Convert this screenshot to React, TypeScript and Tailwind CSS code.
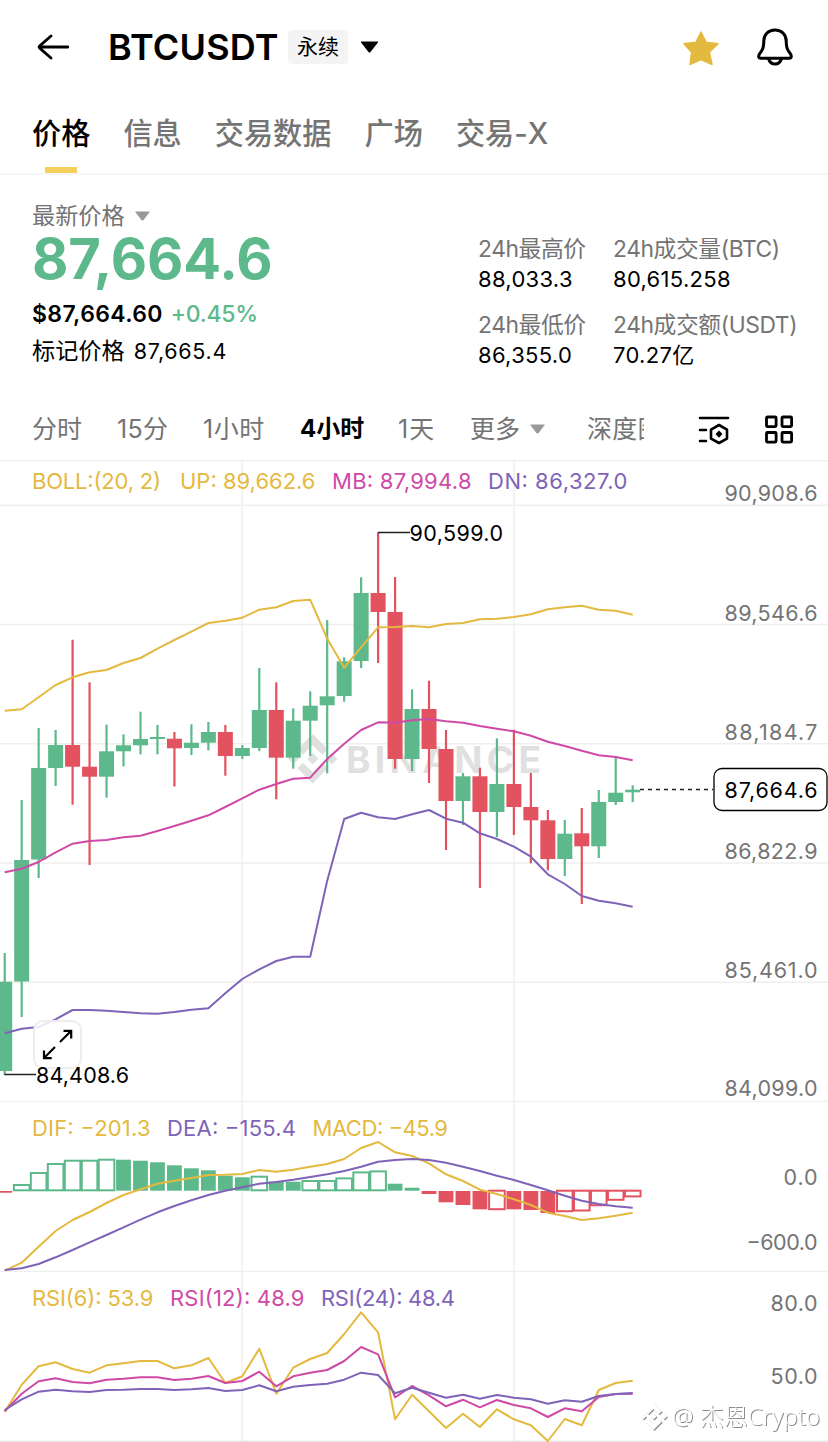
import type { ReactNode } from 'react';

type Candle = [top: number, bottom: number, high: number, low: number, up: 0 | 1];

const GREEN = '#5db98b';
const RED = '#e2525f';
const YELLOW = '#e4b93f';
const PINK = '#cf4aa6';
const PURPLE = '#7f63b8';

const tabs = ['价格', '信息', '交易数据', '广场', '交易-X'];

const stats = [
  { label: '24h最高价', value: '88,033.3' },
  { label: '24h成交量(BTC)', value: '80,615.258' },
  { label: '24h最低价', value: '86,355.0' },
  { label: '24h成交额(USDT)', value: '70.27亿' },
];

const candles: Candle[] = [
  [981.7, 1071, 953, 1075, 1], [860, 981.5, 800, 1017, 1], [768, 859.5, 728, 878, 1], [745, 768, 730, 786, 1],
  [745, 766.7, 639.7, 804.7, 0], [766.7, 776.7, 682.3, 865, 0], [751.3, 776.7, 724.7, 797.7, 1], [745.3, 751.3, 734.3, 766.3, 1],
  [739, 745.3, 711.7, 754.3, 1], [737, 739, 725, 754.3, 1], [738.7, 748.3, 732, 786.5, 0], [742.7, 748, 724.3, 755, 1],
  [732, 742.7, 722, 750.3, 1], [732, 756, 725, 775.7, 0], [748, 756, 745, 759, 1], [710, 748, 668, 751, 1],
  [710, 757.7, 682.3, 799.3, 0], [720.7, 757.7, 708.3, 768.7, 1], [705.7, 720.7, 691.3, 756, 1], [696.3, 705.3, 620, 773.3, 1],
  [661.3, 696, 657.3, 701.7, 1], [593, 661, 577.3, 668, 1], [593, 612, 532.3, 663, 0], [612, 759, 577, 768.7, 0],
  [709, 759, 689.3, 771, 1], [709, 749, 680.7, 783, 0], [749, 801, 730, 850, 0], [776.3, 801, 773, 825, 1],
  [776.3, 812, 767.7, 888, 0], [784, 812, 738.3, 837, 1], [784, 807, 729.7, 835, 0], [807, 820.3, 773, 863.3, 0],
  [820.3, 859, 810, 870.3, 0], [833.7, 859, 820, 876, 1], [833.3, 846.3, 808, 904, 0], [802, 846.3, 790, 858, 1],
  [792.7, 802, 757, 805, 1], [789.7, 792.3, 785.3, 802, 1],
];

const bollUp = [
  710.7, 709.3, 697.3, 685, 677.3, 672.3, 670, 663, 658, 648.7, 640, 631.7, 623, 620.7, 617.7, 609.7, 607.3, 601, 599.7,
  638.7, 667.7, 647.3, 627.3, 627, 626, 627.3, 624, 623, 619.3, 618.7, 617, 614.3, 609.3, 607.3, 605.7, 609.7, 610.7, 614.7,
];
const bollMid = [
  872.3, 868.7, 862, 852.3, 843.7, 841, 840, 837.3, 835.7, 831, 826, 820.7, 815.3, 807, 798.3, 789.7, 784, 778.7, 777.7,
  759, 743.7, 730, 722.3, 722.7, 720.3, 719, 721.3, 722.7, 726, 728.7, 731.3, 735.7, 741.7, 746, 750.7, 755.3, 757, 760.3,
];
const bollDown = [
  1033.3, 1028.7, 1027, 1019.3, 1010, 1010, 1010.7, 1012, 1013.3, 1013.7, 1012, 1009.7, 1008.3, 993.3, 979, 969.3, 961,
  956.7, 956.7, 880.7, 819, 812.7, 817.3, 819, 814.3, 810, 818.7, 822.7, 833.3, 839, 846.7, 856.7, 874.3, 884, 896, 900.7,
  903.3, 906.7,
];

// [end of bar, hollow]
const macdBars: [number, 0 | 1][] = [
  [1192.7, 0], [1184.3, 1], [1172.3, 1], [1163.3, 1], [1160, 1], [1160, 1], [1159, 1], [1159.7, 0], [1160.7, 0], [1162.3, 0],
  [1165.3, 0], [1168.3, 0], [1170.3, 0], [1175.7, 0], [1177.3, 0], [1176, 1], [1181.7, 0], [1181.7, 0], [1180.3, 1],
  [1180.3, 1], [1177.7, 1], [1171.7, 1], [1170.7, 1], [1183.7, 0], [1187.7, 0], [1194, 0], [1202.3, 0], [1205, 0],
  [1209.3, 0], [1209.7, 1], [1209.3, 0], [1210, 0], [1213, 0], [1211.7, 1], [1211, 1], [1205.7, 1], [1200.3, 1], [1196.9, 1],
];
const dif = [
  1270.7, 1262.7, 1246.7, 1231, 1220, 1212, 1203, 1195, 1189.3, 1183.7, 1180.7, 1178, 1175, 1174.7, 1174, 1170, 1171.7,
  1169.7, 1166.7, 1164, 1159, 1148, 1142, 1152.3, 1156, 1163.3, 1174.3, 1181, 1189.7, 1194, 1199.3, 1205, 1212.7, 1216,
  1220, 1218.3, 1215.7, 1212.7,
];
const dea = [
  1270, 1268.3, 1264, 1257.3, 1250, 1242.3, 1235, 1227.3, 1219.7, 1212.3, 1206, 1200.3, 1195, 1190.7, 1187.3, 1183.7, 1182,
  1179.7, 1177, 1174.3, 1171, 1166.7, 1161.7, 1160, 1159, 1160, 1162.7, 1166.7, 1171, 1175.7, 1180, 1185, 1190.3, 1195.7,
  1200.7, 1204, 1206.3, 1207.7,
];

const rsi6 = [
  1412, 1384.7, 1366.3, 1362.3, 1369, 1372.7, 1365.3, 1363.3, 1361, 1361, 1368.3, 1365.3, 1358, 1383, 1376.3, 1348.7,
  1393.7, 1367.7, 1359, 1353, 1334, 1312.3, 1332.3, 1419.3, 1394.7, 1411.3, 1428, 1413.7, 1427, 1409.3, 1419.3, 1425.3,
  1441, 1419, 1425.3, 1390, 1383, 1380.7,
];
const rsi12 = [
  1411.3, 1393.7, 1381.3, 1378.3, 1382, 1383.3, 1379.7, 1378.7, 1377.3, 1377.3, 1380, 1378.7, 1376, 1383, 1381, 1371.7,
  1386.3, 1376.3, 1372.7, 1370, 1361, 1347, 1354.3, 1397.3, 1386, 1395.3, 1406.3, 1399.7, 1407.3, 1400, 1405, 1408.3, 1417,
  1408.3, 1411.3, 1397, 1394, 1393.7,
];
const rsi24 = [
  1410, 1399.3, 1391.7, 1389.7, 1391.3, 1392, 1390, 1389.7, 1389, 1389, 1390, 1389.3, 1388, 1391, 1390, 1385.3, 1391.3,
  1386.7, 1385, 1383.7, 1379.7, 1372.7, 1375, 1393.3, 1387.7, 1392.7, 1397.7, 1394.7, 1398.7, 1395, 1397.7, 1399.3, 1403.7,
  1400.3, 1401.7, 1396, 1394, 1393,
];

const xAt = (i: number) => 4.7 + 16.973 * i;

function Line({ data, color }: { data: number[]; color: string }) {
  const points = data.map((y, i) => `${xAt(i).toFixed(1)},${y}`).join(' ');
  return <polyline points={points} fill="none" stroke={color} strokeWidth="2" strokeLinejoin="round" />;
}

function AxisLabel({ y, width, children }: { y: number; width: number; children: ReactNode }) {
  return (
    <text x={817.5 - width} y={y} textLength={width} fontSize="21.5" fill="#747474">
      {children}
    </text>
  );
}

function VerticalGrid({ y1, y2 }: { y1: number; y2: number }) {
  return <path d={`M242 ${y1}V${y2}M514 ${y1}V${y2}`} stroke="#efefef" strokeWidth="1.5" />;
}

function BinanceMark() {
  return (
    <>
      <path d="M38.73 53.2l24.59-24.58 24.6 24.6 14.3-14.31L63.32 0 24.42 38.9z" />
      <path d="M0 63.31l14.3-14.31 14.31 14.31-14.31 14.3z" />
      <path d="M38.73 73.41L63.32 98l24.6-24.6 14.31 14.29-38.91 38.92-38.9-38.89z" />
      <path d="M98 63.31L112.3 49l14.31 14.3-14.31 14.32z" />
      <path d="M77.83 63.3L63.32 48.78 48.79 63.31l14.53 14.5z" />
    </>
  );
}

function Caret({ className }: { className: string }) {
  return (
    <svg viewBox="0 0 18 12" className={className} fill="currentColor">
      <path d="M1 .5h16q1 0 .4.9L10 11q-1 1-2 0L.6 1.4Q0 .5 1 .5z" />
    </svg>
  );
}

function Header() {
  return (
    <header className="flex h-[94px] items-center pl-[37px] pr-[35px]">
      <svg viewBox="0 0 32 26" className="h-[26px] w-8" fill="none" stroke="#000" strokeWidth="2.8" strokeLinecap="round" strokeLinejoin="round">
        <path d="M31 13H2M14 2L3 11.6q-1.5 1.4 0 2.8L14 24" />
      </svg>
      <h1 className="ml-[39px] w-[170px] whitespace-nowrap text-[36px] leading-none font-semibold tracking-[0.2px]">BTCUSDT</h1>
      <span className="ml-[10px] flex h-[34px] w-[60px] items-center justify-center rounded-[4px] bg-[#f4f4f4] pb-[2px] text-[21px] leading-none">
        永续
      </span>
      <Caret className="ml-[12px] h-[12px] w-[19px]" />
      <svg viewBox="0 0 36 34" className="mt-[1px] ml-auto h-[34px] w-9" fill={YELLOW} stroke={YELLOW} strokeWidth="1.5" strokeLinejoin="round">
        <path d="M18 1l5 10.2 12 1.5-8.6 8.5L29 33.5l-11-5-11 5 1.6-12.3L1 12.7l12-1.5z" />
      </svg>
      <svg viewBox="0 0 36 38" className="ml-[38px] h-[38px] w-9" fill="none" stroke="#000" strokeWidth="3" strokeLinejoin="round">
        <path d="M18 2C11 2 6.8 7 6.8 13c0 6-.6 8-2.6 10.5C2 26 1.5 27 1.7 29q.2 1.2 1.6 1.2h29.4q1.4 0 1.6-1.2c.2-2-.3-3-2.5-5.5C29.800 21 29.2 19 29.2 13c0-6-4.2-11-11.2-11z" />
        <path d="M11.5 30.5c1 3.6 3.3 5.5 6.5 5.5s5.5-1.9 6.5-5.5" />
      </svg>
    </header>
  );
}

function Tabs() {
  return (
    <nav className="flex h-[81px] gap-[33px] border-b-2 border-[#f6f6f6] pl-8 text-[29.2px] font-medium leading-none">
      {tabs.map((tab, i) => (
        <div key={tab} className={`flex flex-col items-center justify-between pt-[25px] whitespace-nowrap ${i === 0 ? 'text-black' : 'text-[#747474]'}`}>
          {tab}
          {i === 0 && <span className="h-[6px] w-8 bg-[#f5cf5e]" />}
        </div>
      ))}
    </nav>
  );
}

function PriceSummary() {
  return (
    <section className="flex h-[225px] pl-8">
      <div className="w-[446px] pt-[28px]">
        <div className="flex items-center gap-[10px] text-[23.2px] leading-[26px] text-[#747474]">
          最新价格
          <Caret className="h-[10px] w-[15px] text-[#999]" />
        </div>
        <div className="mt-[1px] text-[56px] leading-[58px] font-bold tracking-[-0.1px] text-[#5db98b]">87,664.6</div>
        <div className="mt-[11px] flex gap-[8px] text-[23px] leading-[30px]">
          <span className="font-semibold tracking-[0.35px]">$87,664.60</span>
          <span className="font-medium tracking-[-0.3px] text-[#5db98b]">+0.45%</span>
        </div>
        <div className="mt-[7px] flex gap-[9px] text-[23.2px] leading-[30px]">
          标记价格
          <span className="text-[21.5px] tracking-[0.7px]">87,665.4</span>
        </div>
      </div>
      <div className="grid grid-cols-[135px_auto] content-start pt-[60px]">
        {stats.map((s) => (
          <div key={s.label} className="h-[76px] whitespace-nowrap">
            <div className="text-[22.8px] leading-[28px] tracking-[-0.4px] text-[#747474]">{s.label}</div>
            <div className="text-[22px] leading-[32px] tracking-[0.3px]">{s.value}</div>
          </div>
        ))}
      </div>
    </section>
  );
}

function IntervalBar() {
  return (
    <div className="flex h-[60px] items-center pl-8 text-[25px] leading-none whitespace-nowrap text-[#747474]">
      <span className="w-[85px] pb-0.5">分时</span>
      <span className="w-[86px] pb-0.5 tracking-[0.3px]">15分</span>
      <span className="w-[97px] pb-0.5 tracking-[0.6px]">1小时</span>
      <span className="w-[98px] pb-0.5 text-[24px] font-bold text-black">4小时</span>
      <span className="w-[72px] pb-0.5 tracking-[1px]">1天</span>
      <span className="flex w-[117px] items-center gap-[10px] pb-0.5">
        更多
        <Caret className="h-[10px] w-[15px] text-[#999]" />
      </span>
      <span className="w-[56.5px] overflow-hidden py-1 pb-1.5 tracking-[0.3px]">深度图</span>
      <svg viewBox="0 0 32 30" className="ml-[54px] h-[30px] w-8" fill="none" stroke="#000" strokeWidth="2.6" strokeLinecap="round">
        <path d="M2 3h28M2 15h6M2 26h6" />
        <path d="M21 10l8 4.600v9L21 28l-8-4.400v-9z" strokeLinejoin="round" />
        <path d="M21 15.500l3.500 3.600-3.500 3.600-3.500-3.600z" fill="#000" stroke="none" />
      </svg>
      <svg viewBox="0 0 30 30" className="ml-[34px] h-[30px] w-[30px]" fill="none" stroke="#000" strokeWidth="2.8">
        <rect x="2.5" y="2" width="9.6" height="9.6" rx="1" />
        <rect x="18" y="2" width="9.6" height="9.6" rx="1" />
        <rect x="2.5" y="17.5" width="9.6" height="9.6" rx="1" />
        <rect x="18" y="17.5" width="9.6" height="9.6" rx="1" />
      </svg>
    </div>
  );
}

function CandleChart() {
  return (
    <svg viewBox="0 460 828 642" className="block h-[642px] w-full">
      <path d="M0 460.5H828M0 505.3H828M0 624.5H828M0 743.7H828M0 863H828M0 982.3H828M0 1101.5H828" stroke="#efefef" strokeWidth="1.5" />
      <VerticalGrid y1={460} y2={1102} />

      <g fill="#e0e0e0">
        <g transform="translate(288 734) scale(.39)">
          <BinanceMark />
        </g>
        <text x="346" y="773" textLength="195" fontSize="37" fontWeight="700">BINANCE</text>
      </g>

      {candles.map(([top, bottom, high, low, up], i) => (
        <g key={i} fill={up ? GREEN : RED}>
          <rect x={xAt(i) - 1.1} y={high} width="2.2" height={low - high} />
          <rect x={xAt(i) - 7.5} y={top} width="15" height={bottom - top} />
        </g>
      ))}

      <Line data={bollUp} color={YELLOW} />
      <Line data={bollMid} color={PINK} />
      <Line data={bollDown} color={PURPLE} />

      <g fontSize="22">
        <text x="32" y="488.5" textLength="129" fill={YELLOW}>BOLL:(20, 2)</text>
        <text x="180" y="488.5" textLength="135.5" fill={YELLOW}>UP: 89,662.6</text>
        <text x="332" y="488.5" textLength="139.500" fill={PINK}>MB: 87,994.8</text>
        <text x="488" y="488.5" textLength="139.500" fill={PURPLE}>DN: 86,327.0</text>
      </g>

      <path d="M378 532.5H410M4.5 1074.5H36" stroke="#222" strokeWidth="1.4" />
      <text x="409.5" y="540.7" textLength="93.5" fontSize="21.5">90,599.0</text>

      {/* fullscreen toggle */}
      <rect x="34" y="1021" width="47" height="47" rx="9" fill="#fff" fillOpacity=".85" stroke="#ededed" strokeWidth="2" />
      <path d="M60 1042L71 1031M63.5 1030.8H71.2V1038.5M55 1047L44 1058M51.7 1058.2H44V1050.5" fill="none" stroke="#000" strokeWidth="2.2" />
      <text x="36" y="1083.3" textLength="93" fontSize="21.5">84,408.6</text>

      <AxisLabel y={501} width={93}>90,908.6</AxisLabel>
      <AxisLabel y={621} width={93}>89,546.6</AxisLabel>
      <AxisLabel y={740} width={93}>88,184.7</AxisLabel>
      <AxisLabel y={859.3} width={93}>86,822.9</AxisLabel>
      <AxisLabel y={978.3} width={93}>85,461.0</AxisLabel>
      <AxisLabel y={1095.5} width={93}>84,099.0</AxisLabel>

      <path d="M640 789.5H713" stroke="#222" strokeWidth="1.5" strokeDasharray="4 4" />
      <rect x="714" y="768.5" width="113" height="42" rx="8" fill="#fff" stroke="#000" strokeWidth="1.3" />
      <text x="724.5" y="798" textLength="93" fontSize="21.5">87,664.6</text>
    </svg>
  );
}

function MacdChart() {
  return (
    <svg viewBox="0 1102 828 170" className="block h-[170px] w-full">
      <VerticalGrid y1={1102} y2={1272} />
      <path d="M0 1271.5H828" stroke="#efefef" strokeWidth="1.5" />
      {macdBars.map(([end, hollow], i) => {
        const up = end < 1190;
        const color = up ? GREEN : RED;
        if (hollow) {
          const y = up ? end + 0.7 : 1190.7;
          const height = up ? 1190.3 - y : end - 0.5 - y;
          return <rect key={i} x={xAt(i) - 7.8} y={y} width="15.6" height={height} fill="#fff" stroke={color} strokeWidth="2" />;
        }
        return <rect key={i} x={xAt(i) - 7.4} y={up ? end : 1191} width="14.8" height={up ? 1190.7 - end : end - 1191} fill={color} />;
      })}
      <Line data={dif} color={YELLOW} />
      <Line data={dea} color={PURPLE} />
      <g fontSize="22">
        <text x="32" y="1135.7" textLength="118.500" fill={YELLOW}>DIF: −201.3</text>
        <text x="167" y="1135.7" textLength="129" fill={PURPLE}>DEA: −155.4</text>
        <text x="312.5" y="1135.7" textLength="135.5" fill={YELLOW}>MACD: −45.9</text>
      </g>
      <AxisLabel y={1185} width={34}>0.0</AxisLabel>
      <AxisLabel y={1249.7} width={71}>−600.0</AxisLabel>
    </svg>
  );
}

function RsiChart() {
  return (
    <svg viewBox="0 1272 828 170" className="block h-[170px] w-full">
      <VerticalGrid y1={1272} y2={1441} />
      <path d="M0 1441.3H828" stroke="#e8e8e8" strokeWidth="1.5" />
      <Line data={rsi6} color={YELLOW} />
      <Line data={rsi12} color={PINK} />
      <Line data={rsi24} color={PURPLE} />
      <g fontSize="22">
        <text x="32" y="1305.5" textLength="121.5" fill={YELLOW}>RSI(6): 53.9</text>
        <text x="170" y="1305.5" textLength="134.5" fill={PINK}>RSI(12): 48.9</text>
        <text x="321" y="1305.5" textLength="134" fill={PURPLE}>RSI(24): 48.4</text>
      </g>
      <AxisLabel y={1311} width={47}>80.0</AxisLabel>
      <AxisLabel y={1383.6} width={47}>50.0</AxisLabel>
    </svg>
  );
}

function Signature() {
  return (
    <div className="absolute right-[8px] bottom-[9px] flex items-center gap-[5px] drop-shadow-[1px_1px_0.6px_rgba(0,0,0,0.45)]">
      <svg viewBox="0 0 126.61 126.61" className="h-[27px] w-[27px]" fill="#fff">
        <BinanceMark />
      </svg>
      <span className="font-['Noto_Sans','Noto_Sans_CJK_SC',sans-serif] text-[24px] leading-[34px] font-light whitespace-nowrap text-white">
        @ 杰恩Crypto
      </span>
    </div>
  );
}

export default function App() {
  return (
    <div className="relative h-[1442px] w-[828px] overflow-hidden bg-white font-['Inter','Noto_Sans_CJK_SC',sans-serif] text-black">
      <Header />
      <Tabs />
      <PriceSummary />
      <IntervalBar />
      <CandleChart />
      <MacdChart />
      <RsiChart />
      <Signature />
    </div>
  );
}
